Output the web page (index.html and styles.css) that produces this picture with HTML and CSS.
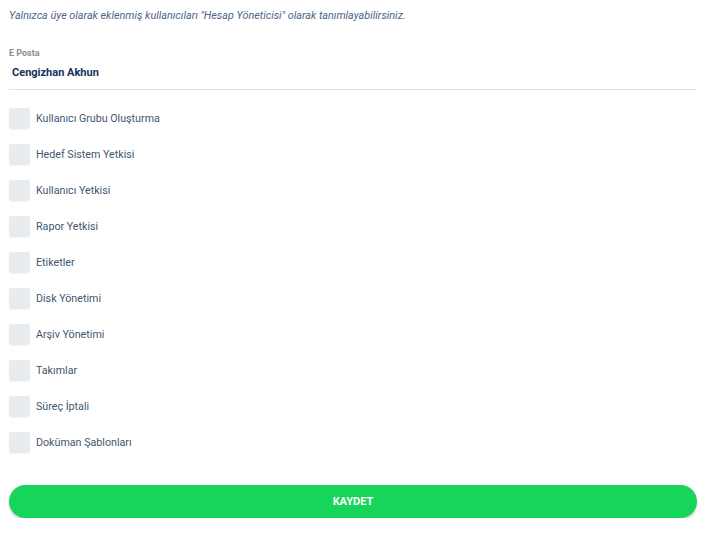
FILE: index.html
```html
<!DOCTYPE html>
<html lang="tr">
  <head>
    <meta charset="UTF-8" />
    <meta name="viewport" content="width=device-width, initial-scale=1.0" />
    <title>Hesap Yöneticisi</title>
    <link rel="stylesheet" href="styles.css">
  </head>
  <body>
    <form class="admin-form">
      <p class="admin-form__note">
        Yalnızca üye olarak eklenmiş kullanıcıları "Hesap Yöneticisi" olarak tanımlayabilirsiniz.
      </p>

      <div class="field">
        <label class="field__label">E Posta</label>
        <div class="field__value">Cengizhan Akhun</div>
      </div>

      <ul class="perms">
        <li class="perm"><span class="perm__box"></span><span class="perm__text">Kullanıcı Grubu Oluşturma</span></li>
        <li class="perm"><span class="perm__box"></span><span class="perm__text">Hedef Sistem Yetkisi</span></li>
        <li class="perm"><span class="perm__box"></span><span class="perm__text">Kullanıcı Yetkisi</span></li>
        <li class="perm"><span class="perm__box"></span><span class="perm__text">Rapor Yetkisi</span></li>
        <li class="perm"><span class="perm__box"></span><span class="perm__text">Etiketler</span></li>
        <li class="perm"><span class="perm__box"></span><span class="perm__text">Disk Yönetimi</span></li>
        <li class="perm"><span class="perm__box"></span><span class="perm__text">Arşiv Yönetimi</span></li>
        <li class="perm"><span class="perm__box"></span><span class="perm__text">Takımlar</span></li>
        <li class="perm"><span class="perm__box"></span><span class="perm__text">Süreç İptali</span></li>
        <li class="perm"><span class="perm__box"></span><span class="perm__text">Doküman Şablonları</span></li>
      </ul>

      <button type="button" class="btn-save">KAYDET</button>
    </form>
  </body>
</html>
```

FILE: styles.css
```css
* {
  margin: 0;
  padding: 0;
  box-sizing: border-box;
}

body {
  background-color: #fff;
  font-family: Roboto, "Liberation Sans", sans-serif;
  color: #4a5568;
}

.admin-form {
  width: 688px;
  margin-left: 9px;
  padding-top: 9px;
}

.admin-form__note {
  font-size: 10.8px;
  font-style: italic;
  color: #4c6584;
  line-height: 14px;
}

.field {
  margin-top: 24px;
  border-bottom: 1px solid #dfe2e6;
  padding-bottom: 9px;
}
.field__label {
  display: block;
  font-size: 9px;
  font-weight: 700;
  color: #8a9098;
  line-height: 12px;
}
.field__value {
  margin-top: 7px;
  padding-left: 3px;
  font-size: 11px;
  font-weight: 700;
  color: #15325a;
  line-height: 14px;
}

.perms {
  list-style: none;
  margin-top: 18px;
  display: flex;
  flex-direction: column;
  gap: 15px;
}
.perm {
  display: flex;
  align-items: center;
  gap: 6px;
}
.perm__box {
  width: 21px;
  height: 21px;
  border-radius: 2px;
  background-color: #e8ecef;
  box-shadow: 0 1px 1px rgba(0, 0, 0, 0.04);
}
.perm__text {
  font-size: 10.7px;
  color: #3f5670;
}

.btn-save {
  display: block;
  width: 688px;
  height: 33px;
  margin-top: 32px;
  border: none;
  border-radius: 17px;
  background-color: #17d45a;
  color: #fff;
  font-family: Roboto, "Liberation Sans", sans-serif;
  font-size: 11px;
  font-weight: 700;
  box-shadow: 0 2px 3px rgba(0, 0, 0, 0.2);
}
```
